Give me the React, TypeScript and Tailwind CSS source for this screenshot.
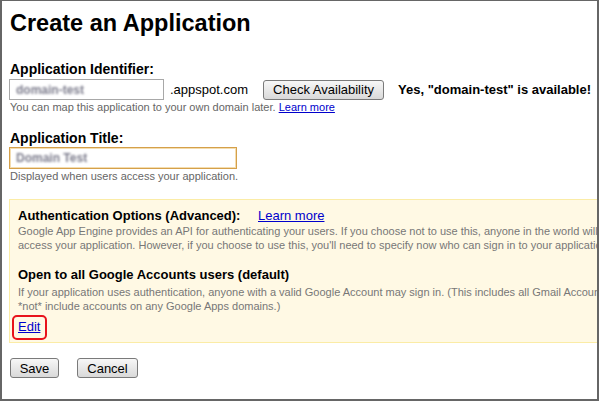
import React from 'react';

const btn =
  'h-[20px] rounded-[3px] border border-[#7a7a7a] bg-gradient-to-b from-[#f7f7f7] to-[#d9d9d9] text-[13px] leading-none text-black';

export default function App() {
  return (
    <div className="w-[599px] h-[401px] overflow-hidden border-2 border-t border-[#666] bg-white font-['Liberation_Sans',Arial,sans-serif] text-black">
      <div className="pl-2 pt-[8px] w-[900px]">
        {/* Title */}
        <h1 className="text-[23.5px] font-bold leading-[28px]">Create an Application</h1>

        {/* Identifier */}
        <div className="mt-[24px] text-[14px] font-bold leading-4">Application Identifier:</div>
        <div className="mt-[2px] flex items-center h-[21px]">
          <div className="-ml-px w-[155px] h-[21px] border border-[#a8a8a8] flex items-center pl-[6px]">
            <span className="text-[12px] font-bold text-[#7c7c8c] blur-[1px]">domain-test</span>
          </div>
          <span className="ml-[6px] text-[13px]">.appspot.com</span>
          <button className={`${btn} ml-[15px] w-[121px]`}>Check Availability</button>
          <span className="ml-[14px] text-[13px] font-bold">Yes, "domain-test" is available!</span>
        </div>
        <p className="mt-[1px] text-[11px] leading-[13px] text-[#666]">
          You can map this application to your own domain later.{' '}
          <a href="#" className="text-[#0000cc] underline">Learn more</a>
        </p>

        {/* Title field */}
        <div className="mt-[16px] text-[14px] font-bold leading-4">Application Title:</div>
        <div className="mt-[1px] -ml-px w-[228px] h-[22px] border border-[#d5a04a] shadow-[inset_0_0_0_1px_#f4ddb0] flex items-center pl-[6px]">
          <span className="text-[12px] font-bold text-[#7c7c8c] blur-[1px]">Domain Test</span>
        </div>
        <p className="mt-[1px] text-[11px] leading-[13px] text-[#666]">Displayed when users access your application.</p>

        {/* Authentication box */}
        <div className="mt-[16px] -ml-px w-[800px] h-[144px] border border-[#fbeca6] bg-[#fff9e4] pl-[8px] pt-[8px]">
          <div className="flex items-baseline leading-4">
            <span className="w-[240px] shrink-0 text-[13px] font-bold">Authentication Options (Advanced):</span>
            <a href="#" className="text-[13px] text-[#0000cc] underline">Learn more</a>
          </div>
          <p className="text-[11px] leading-[14px] text-[#777] whitespace-nowrap">
            Google App Engine provides an API for authenticating your users. If you choose not to use this, anyone in the world will be able to
            <br />
            access your application. However, if you choose to use this, you'll need to specify now who can sign in to your application.
          </p>

          <div className="mt-[15px] text-[13px] font-bold leading-4">Open to all Google Accounts users (default)</div>
          <p className="mt-[2px] text-[11px] leading-[14px] text-[#777] whitespace-nowrap">
            If your application uses authentication, anyone with a valid Google Account may sign in. (This includes all Gmail Accounts, but does
            <br />
            *not* include accounts on any Google Apps domains.)
          </p>

          <div className="mt-[5px] leading-4">
            <span className="relative inline-block">
              <a href="#" className="text-[13px] text-[#0000cc] underline">Edit</a>
              <span className="absolute -left-[6px] -top-[3px] -right-[7px] -bottom-[5px] rounded-[5px] border-2 border-[#e8131b]" />
            </span>
          </div>
        </div>

        {/* Actions */}
        <div className="mt-[15px] flex">
          <button className={`${btn} w-[49px]`}>Save</button>
          <button className={`${btn} ml-[18px] w-[61px]`}>Cancel</button>
        </div>
      </div>
    </div>
  );
}
